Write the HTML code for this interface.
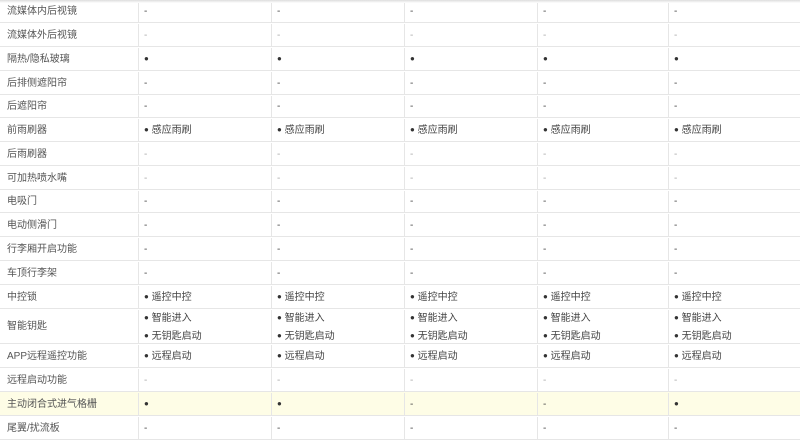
<!DOCTYPE html><html><head><meta charset="utf-8"><style>
body{margin:0;width:800px;height:440px;overflow:hidden;background:#fff;font-family:"Liberation Sans","Noto Sans CJK SC",sans-serif;font-size:10px;color:#444}
.r{position:absolute;left:0;width:800px;border-bottom:1px solid #e6e6e6;box-sizing:border-box}
.c{position:absolute;top:1px;bottom:0;border-left:1px solid #e6e6e6;box-sizing:border-box;padding-left:5px;display:flex;flex-direction:column;justify-content:center;line-height:17px}
.c0{left:0;width:138px;border-left:none;padding-left:7px;color:#555}
.y{background:#fefde6}
.l{color:#aaa}
.b{font-size:8px;color:#333;vertical-align:1px}
.top{position:absolute;left:0;top:0;width:800px;height:3px;background:linear-gradient(#ddd,#fff)}
</style></head><body>
<div id="t"></div>
<div class="top"></div>
<script>
var B='<span class="b">●</span>';
var rows=[
["流媒体内后视镜",["-","-","-","-","-"],0,23],
["流媒体外后视镜",["-","-","-","-","-"],23,24,1],
["隔热/隐私玻璃",["●","●","●","●","●"],47,24],
["后排侧遮阳帘",["-","-","-","-","-"],71,24],
["后遮阳帘",["-","-","-","-","-"],95,23],
["前雨刷器",["● 感应雨刷","● 感应雨刷","● 感应雨刷","● 感应雨刷","● 感应雨刷"],118,24],
["后雨刷器",["-","-","-","-","-"],142,24,1],
["可加热喷水嘴",["-","-","-","-","-"],166,24,1],
["电吸门",["-","-","-","-","-"],190,23],
["电动侧滑门",["-","-","-","-","-"],213,24],
["行李厢开启功能",["-","-","-","-","-"],237,24],
["车顶行李架",["-","-","-","-","-"],261,24],
["中控锁",["● 遥控中控","● 遥控中控","● 遥控中控","● 遥控中控","● 遥控中控"],285,24],
["智能钥匙",["● 智能进入<br>● 无钥匙启动","● 智能进入<br>● 无钥匙启动","● 智能进入<br>● 无钥匙启动","● 智能进入<br>● 无钥匙启动","● 智能进入<br>● 无钥匙启动"],309,35],
["APP远程遥控功能",["● 远程启动","● 远程启动","● 远程启动","● 远程启动","● 远程启动"],344,24],
["远程启动功能",["-","-","-","-","-"],368,24,1],
["主动闭合式进气格栅",["●","●","-","-","●"],392,24,0,1],
["尾翼/扰流板",["-","-","-","-","-"],416,24]];
var xs=[138,271,404,537,668,800],h="";
rows.forEach(function(r){
h+='<div class="r'+(r[5]?' y':'')+'" style="top:'+r[2]+'px;height:'+r[3]+'px"><div class="c c0">'+r[0]+'</div>';
for(var i=0;i<5;i++)h+='<div class="c'+(r[4]?' l':'')+'" style="left:'+xs[i]+'px;width:'+(xs[i+1]-xs[i])+'px"><div>'+r[1][i].replace(/●/g,B)+'</div></div>';
h+='</div>';});
document.getElementById("t").innerHTML=h.replace(/<div>([^<]*<span[^>]*>●<\/span>[^<]*)<br>/g,'<div>$1</div><div>');
</script>
</body></html>
